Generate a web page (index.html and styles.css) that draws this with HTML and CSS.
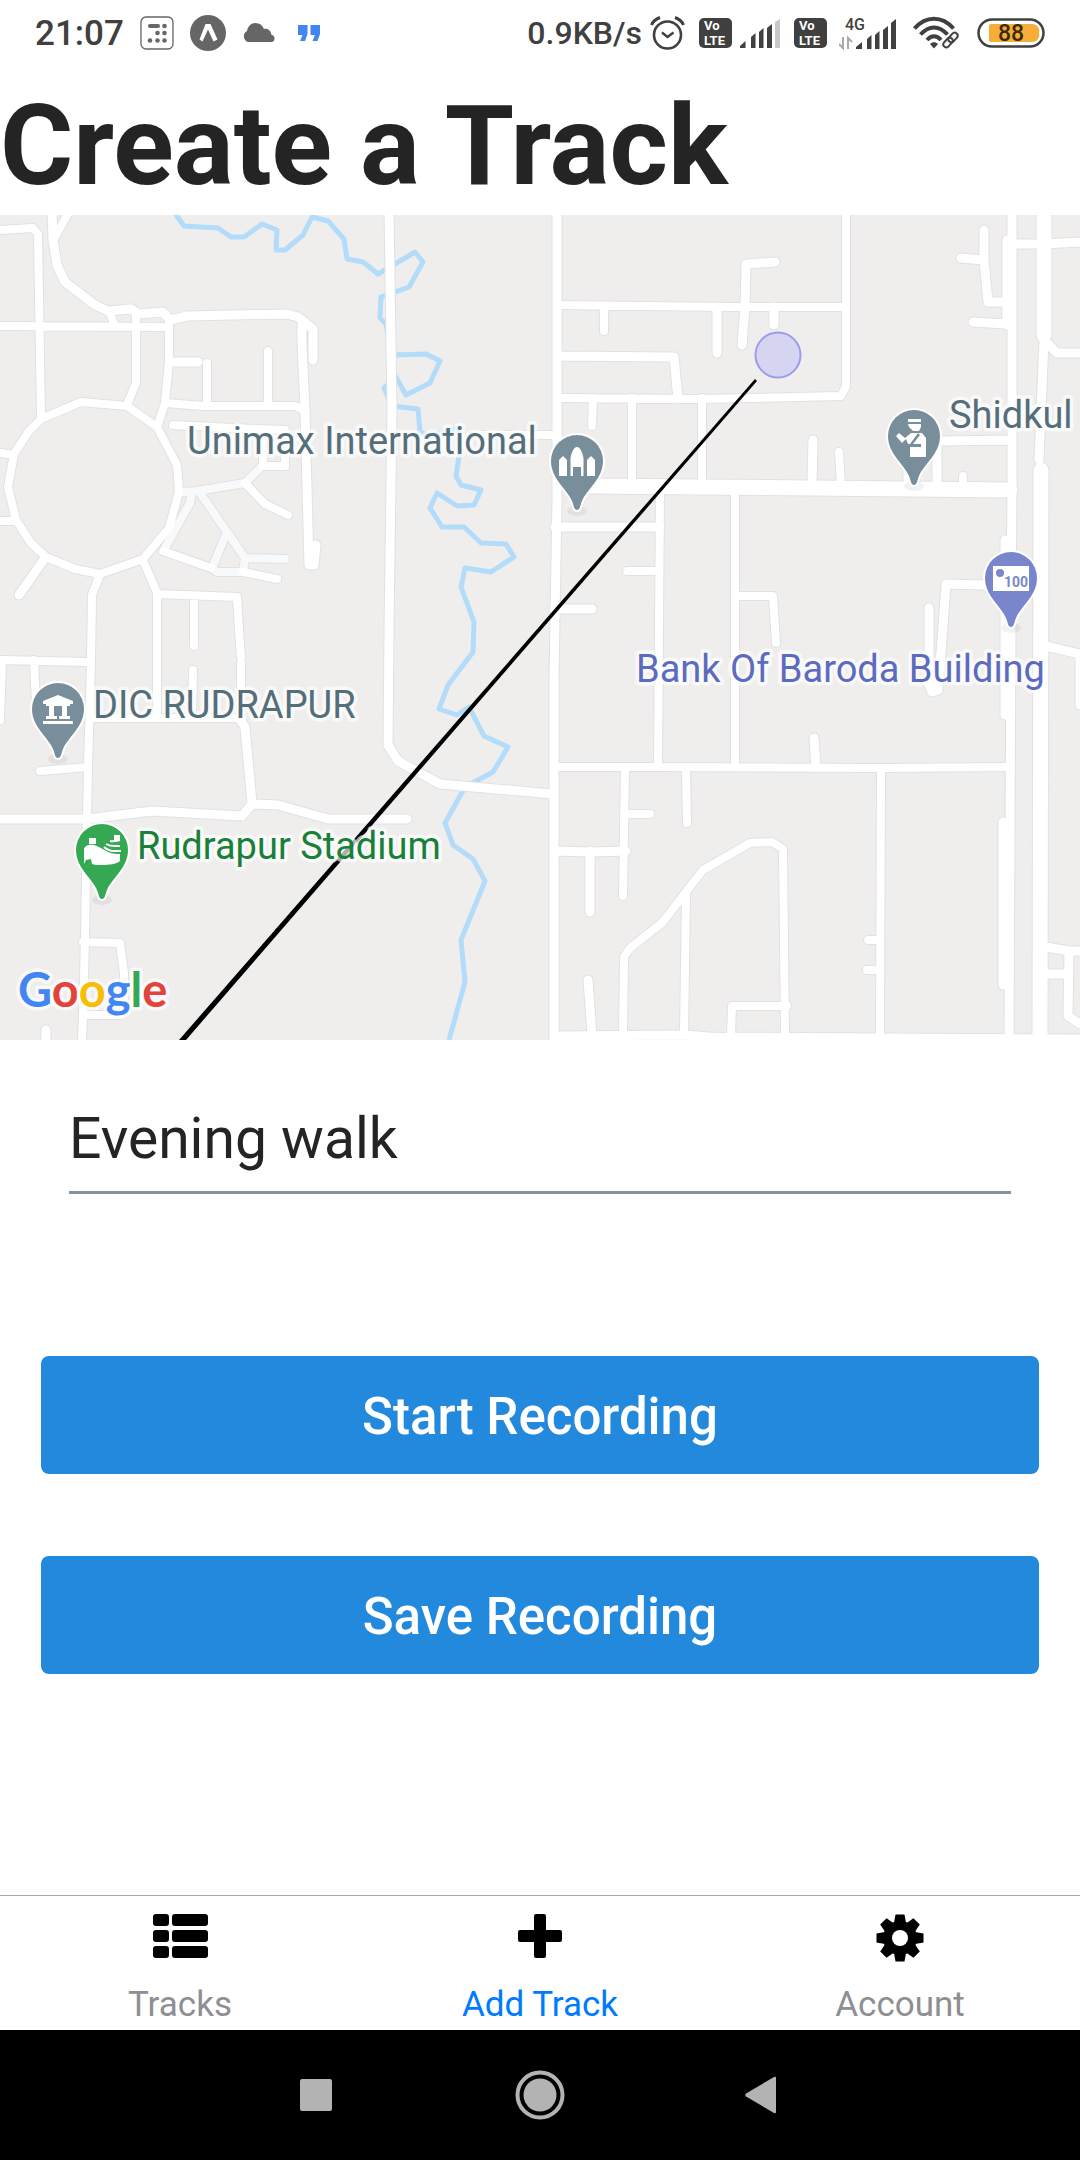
FILE: index.html
```html
<!DOCTYPE html>
<html lang="en">
<head>
<meta charset="utf-8">
<meta name="viewport" content="width=device-width, initial-scale=1">
<title>Create a Track</title>
<link rel="stylesheet" href="styles.css">
</head>
<body>
<header class="status">
  <div class="status-left">
    <span class="clock">21:07</span>
    <svg class="i-calc" width="34" height="34" viewBox="0 0 34 34" fill="#666"><rect x="1" y="1" width="32" height="32" rx="5" fill="none" stroke="#666" stroke-width="1.3"/><rect x="8" y="8" width="12" height="4" rx="2"/><circle cx="24.500" cy="10" r="2.300"/><circle cx="17.500" cy="17" r="2.300"/><circle cx="24.500" cy="17" r="2.300"/><circle cx="10" cy="24.500" r="2.300"/><circle cx="17.500" cy="24.500" r="2.300"/><circle cx="24.500" cy="24.500" r="2.300"/></svg>
    <svg width="36" height="36" viewBox="0 0 36 36"><circle cx="18" cy="18" r="18" fill="#666"/><path d="M15.500 9h5l7 15.500-4 2L18 14.500l-5.500 12-3-2z" fill="#fff"/></svg>
    <svg class="i-cloud" width="34" height="20" viewBox="0 0 34 20" fill="#666"><path d="M6 19a6 6 0 0 1-1-11C6 3 9 0 13.500 0c4 0 7 2 8.500 6 4-1 7 2 7.500 6A3.600 3.600 0 0 1 30 19z"/></svg>
    <svg width="22" height="16" viewBox="0 0 22 16" fill="#4285f4"><path d="M0 0h9.500v9L7 16H2l2.500-6H0zM12.500 0H22v9l-2.500 7h-5l2.500-6h-4.500z"/></svg>
  </div>
  <div class="status-right">
    <span class="rate">0.9KB/s</span>
    <svg class="i-alarm" width="35" height="34" viewBox="0 0 35 34" fill="none" stroke="#404040" stroke-width="3"><ellipse cx="17.500" cy="19" rx="13.500" ry="13.500" stroke-width="2.600"/><path d="M12 16.500l5.500 4.500 6-4.500" stroke-width="2.400"/><path d="M1.500 9C3 5.500 6 3 10 1.500M33.500 9C32 5.500 29 3 25 1.500" stroke-width="3"/></svg>
    <svg class="i-volte" width="33" height="30" viewBox="0 0 33 30"><rect width="33" height="30" rx="5" fill="#404040"/><text x="5" y="12" class="volte">Vo</text><text x="5" y="27" class="volte">LTE</text></svg>
    <svg class="i-signal" width="40" height="29" viewBox="0 0 40 29" fill="#404040"><path d="M0 29v-2l5.500-5v7zM11 29V18l4.500-4v15zM19 29V13l4.500-4v20zM27 29V9l5-4v24z"/><path d="M35 29V3l5-3v29z" fill="#c8c8c8"/></svg>
    <svg class="i-volte" width="33" height="30" viewBox="0 0 33 30"><rect width="33" height="30" rx="5" fill="#404040"/><text x="5" y="12" class="volte">Vo</text><text x="5" y="27" class="volte">LTE</text></svg>
    <svg class="i-4g" width="58" height="36" viewBox="0 -4 58 36" fill="#404040"><text x="6" y="11" class="net">4G</text><path d="M17 30v-2l6-5v7zM28 30V20l4.500-4v14zM36 30V16l4.500-4v18zM44 30V11l5-4v23zM52 30V4l5-4v30z"/><path d="M4 18v11L0 25M9 30V19l4 4" fill="none" stroke="#aaa" stroke-width="2"/></svg>
    <svg class="i-wifi" width="48" height="34" viewBox="0 0 48 34" fill="none" stroke="#404040" stroke-width="4"><path d="M1.500 12.500C13-.5 29-.5 40.500 12.500M7.500 18.500C16 9 26 9 34.500 18.500M14 24c4.500-5 9.500-5 14 0"/><path d="M17 28c2.500-2.500 5.500-2.500 8 0l-4 4.500z" fill="#404040" stroke="none"/><g stroke-width="2"><rect x="37" y="16" width="6" height="11" rx="3" transform="rotate(42 40 21.500)"/><rect x="32" y="21" width="6" height="11" rx="3" transform="rotate(42 35 26.500)"/></g></svg>
    <svg width="68" height="30" viewBox="0 0 68 30"><rect x="1.500" y="1.500" width="65" height="27" rx="13.500" fill="#fff" stroke="#404040" stroke-width="2.500"/><path d="M14 6h41a7 7 0 0 1 7 9 7 7 0 0 1-7 9H14a2 2 0 0 1-2-2V8a2 2 0 0 1 2-2z" fill="#f6ae38"/><text x="34" y="23" text-anchor="middle" class="charge">88</text></svg>
  </div>
</header>

<main class="screen">
  <h1 class="title">Create a Track</h1>

  <svg class="map" viewBox="0 215 1080 825" role="img" aria-label="Map of the current track">
    <defs>
      <path id="pin" d="M0 49C-3 49-3 45-5 40C-10 28-26 18-26 0A26 26 0 0 1 26 0C26 18 10 28 5 40C3 45 3 49 0 49z"/>
      <path id="faint" d="M181 492L197 491 245 483 262 466M192 492L190 503 165 548M200 493L227 532 245 558 285 559M227 532L212 568 217 572 243 572 245 558"/>
      <path id="streets" d="M0 230L33 228 38 234 41 417M70 210L55 237M0 326L167 327M110 313L115 327M136 315V383L127 405M169 320V362L165 403 157 427M207 363V405M268 351V405M166 403L203 406H295L305 411M173 425L233 428 285 430V466H263V443M41 419L81 402 127 406 157 427 177 465 179 492 169 528 143 559 100 574 75 569 46 557 31 543 16 520 8 487 14 454 29 431zM0 453L14 455M0 521H16M100 574L92 595 91 662 88 767 87 817 85 937 83 1017 82 1040M143 560L157 593V717M157 594L237 597 239 630 241 657M194 596V646M193 670L192 717M241 663V717M92 718H239M0 660L88 662M2 660L0 720M34 660L36 703M40 771L88 767M83 942L120 943 124 973V1010M83 1015H120M245 483L265 504 288 515M163 551L211 568M243 572L277 579M480 435H553M557 305L730 307H846M604 306V331M557 398L700 399 841 396 846 386V210M593 398L592 426M632 398V480M702 398V485M660 490L658 766M627 571H658M554 767L655 767 882 768 1010 767M625 767L623 896M624 814H650M686 767L687 823M623 1035L624 957 630 948 662 923 703 870 750 843 772 842 783 849 785 1035M686 895L684 1035M731 1035L732 1006H787M881 768L880 1035M868 940H880M867 970H880M735 490V767M735 596L773 596 776 643M839 452L841 485M963 476V486"/>
      <path id="roads" d="M52 210L53 240 57 265 65 282 95 305 108 311 131 309 138 314 163 312 170 320 187 316 287 314 298 317 313 329V360M172 362H198M302 323V343L305 410 309 565H314L316 545M45 558L19 595M239 718L245 727 252 803M0 819H87L152 811 242 816 252 804 278 805 328 819H407M46 1030V1040M389 210L392 410 389 630 388 745 398 761 440 784 553 794M557 210V500L554 680V1040M717 307V353M557 356L674 357 678 399M555 527H660M554 609H592M554 851L590 852 626 851M590 851V912M588 980L592 1034M814 738L816 767M813 440L812 485M937 440V487M908 460V486M937 441L1012 440M984 230V260L988 302H1004M961 258L984 260M973 322L1006 324M775 262L746 264 745 307 742 345M774 307V325M1012 210V480L1011 630 1009 1040M1012 244H1044L1080 242M1044 340L1057 353H1080M985 585L946 584 942 640 938 690 932 692 929 685V608M1046 646L1080 654V705M1045 947L1070 951H1080M1045 974H1068M1069 951L1068 1016 1080 1024M554 1036L684 1035 710 1037 1080 1039M1007 240V325M1005 540V715M1003 822V985M1044 340L1039 460"/>
      <path id="avenues" d="M590 486L700 487 1010 490M1044 210V335M1041 470L1040 1040"/>
    </defs>
    <rect y="215" width="1080" height="825" fill="#efeeed"/>
    <path class="river" d="M174 212L184 226 218 228 231 237 244 237 262 224 277 230 276 250 285 250 303 235 312 217 328 221 344 239 347 259 363 262 378 274 415 252 423 262 409 287 381 297 380 318 386 324 392 355 426 354 440 361 430 383 406 395 396 377 384 388 392 406 418 409 420 432 430 436 458 428 460 450 456 476 461 485 481 490 474 505 457 506 437 493 430 508 442 527 464 527 481 543 506 544 514 557 491 572 465 568 461 587 474 622 473 652 448 685 439 709 457 715 469 707 484 736 508 747 493 772 465 787 445 823 453 845 473 859 485 881 461 940 465 982 449 1040"/>
    <g class="casing"><use href="#faint" stroke-width="10"/><use href="#streets" stroke-width="10"/><use href="#roads" stroke-width="11"/><use href="#avenues" stroke-width="17"/></g>
    <g class="surface"><use href="#faint" stroke-width="8" stroke="#f8f9fb"/><use href="#streets" stroke-width="8"/><use href="#roads" stroke-width="9"/><use href="#avenues" stroke-width="15"/></g>

    <path d="M179 1040H186L757 381 755 379z"/>
    <circle cx="778" cy="355" r="22.500" fill="#d5d5f1" stroke="#9c9bee" stroke-width="2"/>

    <g class="shadows"><ellipse cx="577" cy="511" rx="10" ry="5"/><ellipse cx="914" cy="486" rx="10" ry="5"/><ellipse cx="1011" cy="628" rx="10" ry="5"/><ellipse cx="58" cy="759" rx="10" ry="5"/><ellipse cx="102" cy="900" rx="10" ry="5"/></g>
    <g class="pins">
      <g transform="translate(577 461)"><use href="#pin" class="civic"/><path d="M-18 15V-1l4-4 4 4v16zM10 15V-1l4-4 4 4v16zM-6.500 15V-3C-5-10-3-14 0-14S5-10 6.500-3V15H4V6H-4v9z"/></g>
      <g transform="translate(914 436)"><use href="#pin" class="civic"/><path d="M-6-17H7v3H-6zM-6-12H7v3L5-5H-1L-5-9zM-18 0l3-3 6 5 6-5H8l4 5v19H-4V11H7V8H-1L6-1l-2-2L-4 8h-2L-8 3l-4 4z"/></g>
      <g transform="translate(1011 578)"><use href="#pin" class="money"/><path d="M-18-12H18V13H-18z"/><circle cx="-11" cy="-5" r="4" class="money-dot"/><text x="-7" y="9" class="note">100</text></g>
      <g transform="translate(58 709)"><use href="#pin" class="civic"/><path d="M-15-5v-3L0-14 15-8v3zM-15 12H15v3H-15zM-12-5H12V-3H9V7h3v3H1V7H4V-3H-4V7h3v3h-11V7h3V-3h-3z"/></g>
      <g transform="translate(102 850)"><use href="#pin" class="park"/><path d="M-18 14V-1c1-4 6-5 10-4C0-3 6 5 18 4v7c-4 4-14 4-24 4l-4-1-1-5-5 1zM-13-6v-6h7v6zM12-9v-6h6v5z"/><path d="M2-3C7 2 13 1 19 1M4-6c5 3 9 2 14 2M8-9c4 1 6 0 10-1" fill="none" stroke="#fff" stroke-width="2"/></g>
    </g>
    <g class="labels">
      <text x="187" y="454" class="civic-label">Unimax International</text>
      <text x="949" y="428" class="civic-label">Shidkul</text>
      <text x="636" y="682" class="money-label">Bank Of Baroda Building</text>
      <text x="93" y="718" class="civic-label">DIC RUDRAPUR</text>
      <text x="137" y="859" class="park-label">Rudrapur Stadium</text>
      <text x="18" y="1007" class="logo"><tspan fill="#4285f4">G</tspan><tspan fill="#e2433a">o</tspan><tspan fill="#fbbc05">o</tspan><tspan fill="#4285f4">g</tspan><tspan fill="#34a853">l</tspan><tspan fill="#e2433a">e</tspan></text>
    </g>
  </svg>

  <form class="form">
    <input class="name" type="text" value="Evening walk" aria-label="Track name">
    <div class="actions">
      <button class="btn" type="button">Start Recording</button>
      <button class="btn" type="button">Save Recording</button>
    </div>
  </form>
</main>

<nav class="tabs">
  <a class="tab" href="#tracks"><svg width="56" height="48" viewBox="0 0 56 48"><rect x="1" width="16" height="12" rx="3"/><rect x="20" width="36" height="12" rx="3"/><rect x="1" y="16" width="16" height="12" rx="3"/><rect x="20" y="16" width="36" height="12" rx="3"/><rect x="1" y="32" width="16" height="12" rx="3"/><rect x="20" y="32" width="36" height="12" rx="3"/></svg>Tracks</a>
  <a class="tab active" href="#add"><svg width="44" height="48" viewBox="0 0 44 48"><path d="M18 0h8a2 2 0 0 1 2 2v14h14a2 2 0 0 1 2 2v8a2 2 0 0 1-2 2H28v14a2 2 0 0 1-2 2h-8a2 2 0 0 1-2-2V28H2a2 2 0 0 1-2-2v-8a2 2 0 0 1 2-2h14V2a2 2 0 0 1 2-2z"/></svg>Add Track</a>
  <a class="tab" href="#account"><svg width="48" height="48" viewBox="-24 -24 48 48"><g id="teeth"><path id="tooth" d="M-6-15L-4.500-23.500H4.500L6-15V15L4.500 23.500H-4.500L-6 15z"/><use href="#tooth" transform="rotate(45)"/><use href="#tooth" transform="rotate(90)"/><use href="#tooth" transform="rotate(135)"/></g><circle r="17"/><circle r="8" fill="#fff"/></svg>Account</a>
</nav>

<footer class="system">
  <button class="key" type="button" aria-label="Recent apps"><svg width="32" height="32" viewBox="0 0 32 32"><rect width="32" height="32" rx="2"/></svg></button>
  <button class="key" type="button" aria-label="Home"><svg width="50" height="50" viewBox="0 0 50 50"><circle cx="25" cy="25" r="22.500" fill="none" stroke="#b3b3b3" stroke-width="4"/><circle cx="25" cy="25" r="16.500"/></svg></button>
  <button class="key" type="button" aria-label="Back"><svg width="38" height="38" viewBox="0 0 38 38"><path d="M1 17.500L29 1q2-1 2 1v34q0 2-2 1L1 20.500q-1.500-1.500 0-3z"/></svg></button>
</footer>
</body>
</html>
```
FILE: styles.css
```css
* { box-sizing: border-box; }

body {
  margin: 0;
  min-height: 100vh;
  display: flex;
  flex-direction: column;
  background: #fff;
  color: #242424;
  font-family: Roboto, "Liberation Sans", sans-serif;
}

svg { display: block; flex: none; }

/* Status bar */
.status {
  display: flex;
  justify-content: space-between;
  height: 66px;
  padding: 0 35px;
  color: #404040;
  font-weight: 500;
}
.status-left, .status-right { display: flex; align-items: center; }
.status-left { gap: 16px; }
.status-right { gap: 8px; }
.clock { font-size: 35px; }
.rate { font-size: 32px; }
.i-cloud { margin-right: 6px; }
.i-alarm { margin-right: 6px; }
.i-signal { margin-right: 6px; }
.i-4g { margin: 0 8px 0 4px; }
.i-wifi { margin-right: 8px; }
.volte { font: 700 13px Roboto, sans-serif; fill: #fff; }
.net { font: 500 16px Roboto, sans-serif; }
.charge { font: 500 23px Roboto, sans-serif; fill: #3c2a08; }

.screen { flex: 1; }

.title {
  margin: 0;
  padding-bottom: 1px;
  padding-top: 12px;
  font-size: 112px;
  font-weight: 700;
  line-height: 136px;
}

/* Map */
.map { width: 100%; height: auto; }
.river { fill: none; stroke: #b3dcfa; stroke-width: 5; stroke-linejoin: round; }
.casing, .surface { fill: none; stroke-linecap: round; stroke-linejoin: round; }
.casing { stroke: #e0e1e5; }
.surface { stroke: #fff; }
.shadows { fill: #000; opacity: 0.05; }
.pins { fill: #fff; }
.pins use { stroke: #fff; stroke-width: 4; paint-order: stroke; }
.civic { fill: #788f9b; }
.money { fill: #7986cb; }
.money-dot, .note { fill: #7986cb; }
.park { fill: #34a853; }
.note { font: 700 14px Roboto, sans-serif; }
.labels {
  font-size: 38px;
  stroke: rgba(255, 255, 255, 0.7);
  stroke-width: 7;
  stroke-linejoin: round;
  paint-order: stroke;
}
.civic-label { fill: #546e7a; }
.money-label { fill: #5c6bc0; }
.park-label { fill: #188038; }
.logo { font-family: Lato, sans-serif; font-size: 47px; font-weight: 700; }

/* Form */
.form { padding: 46px 41px 0; }
.name {
  display: block;
  width: calc(100% - 56px);
  height: 108px;
  margin: 0 28px;
  padding: 0;
  border: 0;
  border-bottom: 3px solid #86939e;
  border-radius: 0;
  background: none;
  color: #242424;
  font: 400 57px Roboto, sans-serif;
  outline: 0;
}
.actions { display: flex; flex-direction: column; gap: 82px; margin-top: 162px; }
.btn {
  height: 118px;
  padding: 3px 0 0;
  border: 0;
  border-radius: 8px;
  background: #2289dc;
  color: #fff;
  font: 500 51px Roboto, sans-serif;
}

/* Tab bar */
.tabs {
  display: flex;
  height: 135px;
  padding-top: 18px;
  border-top: 1px solid #a7a7aa;
}
.tab {
  flex: 1;
  display: flex;
  flex-direction: column;
  align-items: center;
  gap: 23px;
  color: #8e8e93;
  font-size: 35px;
  line-height: 40px;
  text-decoration: none;
}
.tab.active { color: #007aff; }
.tab svg { fill: #000; }

/* System keys */
.system {
  display: flex;
  justify-content: center;
  gap: 96px;
  height: 130px;
  background: #000;
}
.key {
  display: flex;
  align-items: center;
  justify-content: center;
  width: 128px;
  padding: 0;
  border: 0;
  background: none;
}
.key svg { fill: #b3b3b3; }
```
